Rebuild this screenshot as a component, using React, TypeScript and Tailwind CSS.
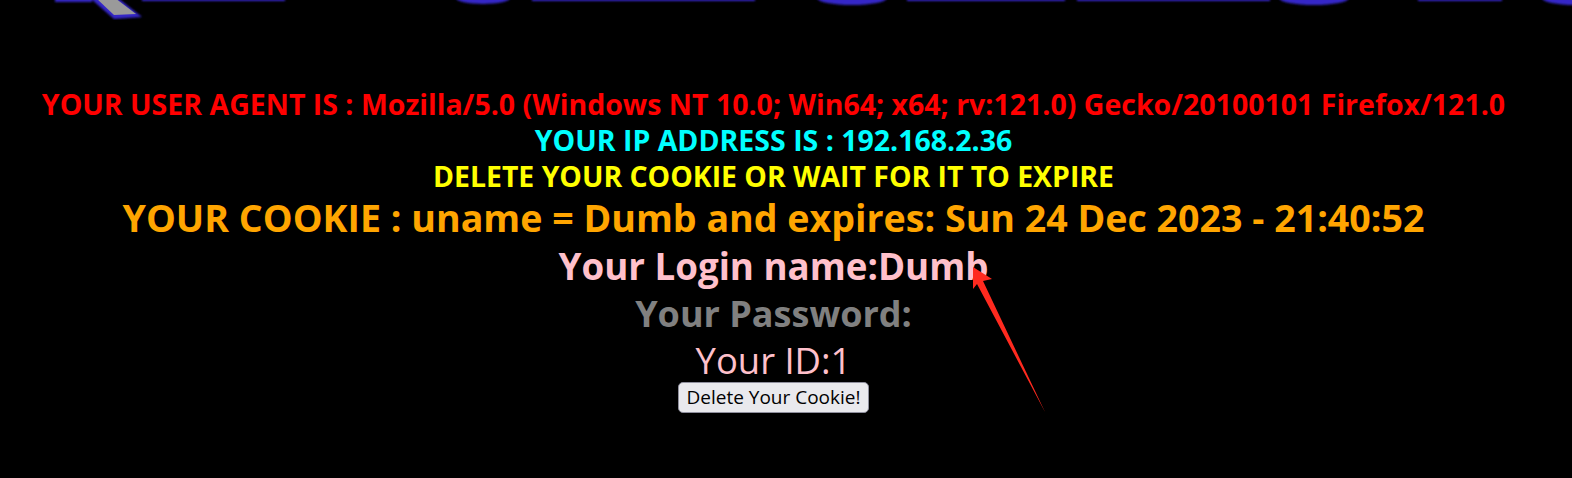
import React from "react";

const font = { fontFamily: '"Open Sans", "Noto Sans", sans-serif' };

function Logo() {
  return (
    <svg width="1572" height="20" viewBox="0 0 1572 20" className="block">
      <defs>
        <filter id="b" x="-10%" y="-200%" width="120%" height="500%">
          <feGaussianBlur stdDeviation="1.3" />
        </filter>
      </defs>
      <g fill="#3428c8" filter="url(#b)">
        <rect x="55" y="-4" width="37" height="6" />
        <rect x="142" y="-4" width="143" height="5" />
        <ellipse cx="483" cy="-2" rx="27" ry="6" />
        <rect x="532" y="-4" width="223" height="5" />
        <ellipse cx="852" cy="-2" rx="35" ry="7" />
        <rect x="907" y="-4" width="158" height="5" />
        <rect x="1077" y="-4" width="193" height="5" />
        <ellipse cx="1314" cy="-2" rx="35" ry="7" />
        <rect x="1418" y="-4" width="84" height="5" />
        <ellipse cx="1575" cy="-2" rx="33" ry="7" />
        <polygon points="90,-2 118,-2 142,17 114,19" />
      </g>
      <polygon points="96,-2 115,-2 136,14 114,15" fill="#9a9a9a" />
    </svg>
  );
}

export default function App() {
  return (
    <div className="relative w-[1572px] h-[478px] overflow-hidden bg-black" style={font}>
      <Logo />
      <div className="w-[1547px] flex flex-col items-center pt-[66px] font-bold">
        <div className="text-[28.5px] leading-[36px] text-[#ff0000] whitespace-nowrap">
          YOUR USER AGENT IS : Mozilla/5.0 (Windows NT 10.0; Win64; x64; rv:121.0) Gecko/20100101 Firefox/121.0
        </div>
        <div className="text-[28.5px] leading-[36px] text-[#00ffff] whitespace-nowrap">
          YOUR IP ADDRESS IS : 192.168.2.36
        </div>
        <div className="text-[28.4px] leading-[36px] text-[#ffff00] whitespace-nowrap">
          DELETE YOUR COOKIE OR WAIT FOR IT TO EXPIRE
        </div>
        <div className="text-[37.6px] leading-[48px] text-[#ffa500] whitespace-nowrap">
          YOUR COOKIE : uname = Dumb and expires: Sun 24 Dec 2023 - 21:40:52
        </div>
        <div className="text-[36.7px] leading-[48px] text-[#ffc0cb] whitespace-nowrap">
          Your Login name:Dumb
        </div>
        <div className="text-[36px] leading-[48px] text-[#808080] whitespace-nowrap">
          Your Password:
        </div>
        <div className="text-[36.4px] leading-[44px] text-[#ffc0cb] font-normal whitespace-nowrap">
          Your ID:1
        </div>
        <button className="h-[31px] w-[191px] rounded-[5px] border border-[#8f8f9d] bg-[#e9e9ed] text-[19px] leading-none text-black font-normal">
          Delete Your Cookie!
        </button>
      </div>
      <svg className="absolute left-0 top-0 pointer-events-none" width="1572" height="478">
        <polygon points="973,267 992,279 983,281 1045,412 977,284 973,289" fill="#ff2a1f" />
      </svg>
    </div>
  );
}
